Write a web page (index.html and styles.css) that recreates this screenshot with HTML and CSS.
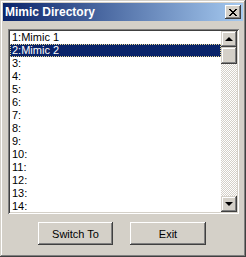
FILE: index.html
```html
<!DOCTYPE html>
<html lang="en">
<head>
    <meta charset="UTF-8">
    <title>Mimic Directory</title>
    <link rel="stylesheet" href="styles.css">
</head>
<body>
    <div class="window">
        <div class="title-bar">
            <span class="title">Mimic Directory</span>
            <button class="close-btn">
                <svg width="8" height="7" viewBox="0 0 8 7">
                    <path d="M0 0h2v1h1v1h2v-1h1v-1h2v1h-1v1h-1v1h-1v1h1v1h1v1h1v1h-2v-1h-1v-1h-2v1h-1v1h-2v-1h1v-1h1v-1h1v-1h-1v-1h-1v-1h-1z" fill="#000"/>
                </svg>
            </button>
        </div>

        <div class="listbox">
            <ul class="items">
                <li>1:Mimic 1</li>
                <li class="selected">2:Mimic 2</li>
                <li>3:</li>
                <li>4:</li>
                <li>5:</li>
                <li>6:</li>
                <li>7:</li>
                <li>8:</li>
                <li>9:</li>
                <li>10:</li>
                <li>11:</li>
                <li>12:</li>
                <li>13:</li>
                <li>14:</li>
            </ul>
            <div class="scrollbar">
                <div class="raised arrow-btn"><span class="arrow up"></span></div>
                <div class="raised thumb"></div>
                <div class="track"></div>
                <div class="raised arrow-btn"><span class="arrow down"></span></div>
            </div>
        </div>

        <div class="actions">
            <button class="raised btn">Switch To</button>
            <button class="raised btn">Exit</button>
        </div>
    </div>
</body>
</html>
```

FILE: styles.css
```css
body {
    margin: 0;
    padding: 0;
    background: #d4d0c8;
    font-family: 'Liberation Sans', Arial, sans-serif;
}
.window {
    width: 246px;
    height: 257px;
    box-sizing: border-box;
    padding: 3px;
    background: #d4d0c8;
    display: flex;
    flex-direction: column;
    box-shadow: inset -1px -1px #404040, inset 1px 1px #d4d0c8,
                inset -2px -2px #808080, inset 2px 2px #fff;
}
.title-bar {
    height: 18px;
    display: flex;
    align-items: center;
    justify-content: space-between;
    padding: 0 2px;
    background: linear-gradient(to right, #0a246a, #a6caf0);
}
.title {
    color: white;
    font-weight: bold;
    font-size: 12px;
}
.close-btn {
    width: 16px;
    height: 14px;
    padding: 0;
    border: none;
    background: #d4d0c8;
    display: flex;
    align-items: center;
    justify-content: center;
    box-shadow: inset -1px -1px #404040, inset 1px 1px #fff,
                inset -2px -2px #808080, inset 2px 2px #d4d0c8;
}
.listbox {
    margin: 8px 4px 0 5px;
    height: 185px;
    box-sizing: border-box;
    padding: 2px;
    background: white;
    display: flex;
    box-shadow: inset 1px 1px #808080, inset -1px -1px #fff,
                inset 2px 2px #404040, inset -2px -2px #d4d0c8;
}
.items {
    flex: 1;
    list-style: none;
    margin: 0;
    padding: 0;
    overflow: hidden;
}
.items li {
    height: 13px;
    line-height: 13px;
    font-size: 11px;
    padding-left: 2px;
    color: black;
    box-sizing: border-box;
}
.items li.selected {
    background: #0a246a;
    color: white;
    outline: 1px dotted #e8d890;
    outline-offset: -1px;
}
.scrollbar {
    width: 16px;
    display: flex;
    flex-direction: column;
}
.raised {
    background: #d4d0c8;
    border: none;
    box-shadow: inset -1px -1px #404040, inset 1px 1px #d4d0c8,
                inset -2px -2px #808080, inset 2px 2px #fff;
}
.arrow-btn {
    height: 16px;
    display: flex;
    align-items: center;
    justify-content: center;
}
.arrow {
    width: 0;
    height: 0;
    border-left: 4px solid transparent;
    border-right: 4px solid transparent;
}
.arrow.up {
    border-bottom: 4px solid black;
    margin-top: -1px;
}
.arrow.down {
    border-top: 4px solid black;
}
.thumb {
    height: 17px;
}
.track {
    flex: 1;
    background: repeating-conic-gradient(#fff 0 25%, #d4d0c8 0 50%) 0 0 / 2px 2px;
}
.actions {
    display: flex;
    gap: 17px;
    padding-left: 35px;
    margin-top: 8px;
}
.btn {
    width: 75px;
    height: 23px;
    padding: 0;
    font-family: 'Liberation Sans', Arial, sans-serif;
    font-size: 11px;
    color: black;
    box-shadow: inset -1px -1px #404040, inset 1px 1px #fff,
                inset -2px -2px #808080, inset 2px 2px #d4d0c8;
}
.btn + .btn {
    width: 76px;
}
```
